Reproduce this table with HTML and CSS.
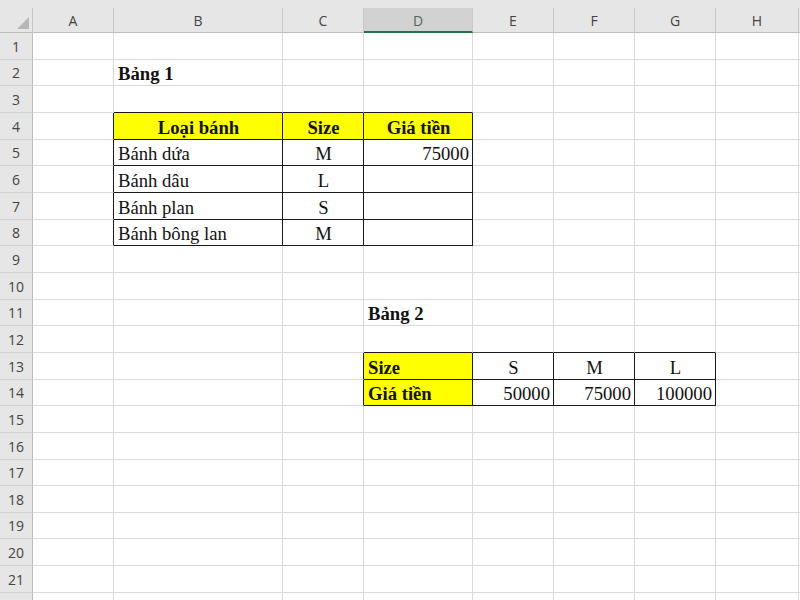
FILE: index.html
```html
<!DOCTYPE html>
<html lang="vi">
<head>
<meta charset="utf-8">
<title>Bảng</title>
<link rel="stylesheet" href="styles.css">
</head>
<body>
<div class="topstrip"></div>
<div class="sheet">
  <div class="corner"><span class="tri"></span></div>
  <div class="ch">A</div><div class="ch">B</div><div class="ch">C</div><div class="ch sel">D</div><div class="ch">E</div><div class="ch">F</div><div class="ch">G</div><div class="ch">H</div><div class="ch"></div>

  <div class="rh">1</div><div class="c"></div><div class="c"></div><div class="c"></div><div class="c"></div><div class="c"></div><div class="c"></div><div class="c"></div><div class="c"></div><div class="c"></div>
  <div class="rh">2</div><div class="c"></div><div class="c b">Bảng 1</div><div class="c"></div><div class="c"></div><div class="c"></div><div class="c"></div><div class="c"></div><div class="c"></div><div class="c"></div>
  <div class="rh">3</div><div class="c"></div><div class="c bb"></div><div class="c bb"></div><div class="c bb"></div><div class="c"></div><div class="c"></div><div class="c"></div><div class="c"></div><div class="c"></div>
  <div class="rh">4</div><div class="c br"></div><div class="c t y b ctr">Loại bánh</div><div class="c t y b ctr">Size</div><div class="c t y b ctr">Giá tiền</div><div class="c"></div><div class="c"></div><div class="c"></div><div class="c"></div><div class="c"></div>
  <div class="rh">5</div><div class="c br"></div><div class="c t">Bánh dứa</div><div class="c t ctr">M</div><div class="c t num">75000</div><div class="c"></div><div class="c"></div><div class="c"></div><div class="c"></div><div class="c"></div>
  <div class="rh">6</div><div class="c br"></div><div class="c t">Bánh dâu</div><div class="c t ctr">L</div><div class="c t"></div><div class="c"></div><div class="c"></div><div class="c"></div><div class="c"></div><div class="c"></div>
  <div class="rh">7</div><div class="c br"></div><div class="c t">Bánh plan</div><div class="c t ctr">S</div><div class="c t"></div><div class="c"></div><div class="c"></div><div class="c"></div><div class="c"></div><div class="c"></div>
  <div class="rh">8</div><div class="c br"></div><div class="c t">Bánh bông lan</div><div class="c t ctr">M</div><div class="c t"></div><div class="c"></div><div class="c"></div><div class="c"></div><div class="c"></div><div class="c"></div>
  <div class="rh">9</div><div class="c"></div><div class="c"></div><div class="c"></div><div class="c"></div><div class="c"></div><div class="c"></div><div class="c"></div><div class="c"></div><div class="c"></div>
  <div class="rh">10</div><div class="c"></div><div class="c"></div><div class="c"></div><div class="c"></div><div class="c"></div><div class="c"></div><div class="c"></div><div class="c"></div><div class="c"></div>
  <div class="rh">11</div><div class="c"></div><div class="c"></div><div class="c"></div><div class="c b">Bảng 2</div><div class="c"></div><div class="c"></div><div class="c"></div><div class="c"></div><div class="c"></div>
  <div class="rh">12</div><div class="c"></div><div class="c"></div><div class="c"></div><div class="c bb"></div><div class="c bb"></div><div class="c bb"></div><div class="c bb"></div><div class="c"></div><div class="c"></div>
  <div class="rh">13</div><div class="c"></div><div class="c"></div><div class="c br"></div><div class="c t y b">Size</div><div class="c t ctr">S</div><div class="c t ctr">M</div><div class="c t ctr">L</div><div class="c"></div><div class="c"></div>
  <div class="rh">14</div><div class="c"></div><div class="c"></div><div class="c br"></div><div class="c t y b">Giá tiền</div><div class="c t num">50000</div><div class="c t num">75000</div><div class="c t num">100000</div><div class="c"></div><div class="c"></div>
  <div class="rh">15</div><div class="c"></div><div class="c"></div><div class="c"></div><div class="c"></div><div class="c"></div><div class="c"></div><div class="c"></div><div class="c"></div><div class="c"></div>
  <div class="rh">16</div><div class="c"></div><div class="c"></div><div class="c"></div><div class="c"></div><div class="c"></div><div class="c"></div><div class="c"></div><div class="c"></div><div class="c"></div>
  <div class="rh">17</div><div class="c"></div><div class="c"></div><div class="c"></div><div class="c"></div><div class="c"></div><div class="c"></div><div class="c"></div><div class="c"></div><div class="c"></div>
  <div class="rh">18</div><div class="c"></div><div class="c"></div><div class="c"></div><div class="c"></div><div class="c"></div><div class="c"></div><div class="c"></div><div class="c"></div><div class="c"></div>
  <div class="rh">19</div><div class="c"></div><div class="c"></div><div class="c"></div><div class="c"></div><div class="c"></div><div class="c"></div><div class="c"></div><div class="c"></div><div class="c"></div>
  <div class="rh">20</div><div class="c"></div><div class="c"></div><div class="c"></div><div class="c"></div><div class="c"></div><div class="c"></div><div class="c"></div><div class="c"></div><div class="c"></div>
  <div class="rh">21</div><div class="c"></div><div class="c"></div><div class="c"></div><div class="c"></div><div class="c"></div><div class="c"></div><div class="c"></div><div class="c"></div><div class="c"></div>
  <div class="rh"></div><div class="c"></div><div class="c"></div><div class="c"></div><div class="c"></div><div class="c"></div><div class="c"></div><div class="c"></div><div class="c"></div><div class="c"></div>
</div>
</body>
</html>
```

FILE: styles.css
```css
html, body {
  margin: 0;
  padding: 0;
  width: 800px;
  height: 600px;
  overflow: hidden;
  background: #ffffff;
}

.topstrip {
  height: 8px;
  background: #e6e6e6;
}

.sheet {
  display: grid;
  grid-template-columns: 33px 81px 169px 81px 109px 81px 81px 81px 83px 1fr;
  grid-template-rows: 25px repeat(22, 26.67px);
}

.sheet > div {
  box-sizing: border-box;
  min-width: 0;
  overflow: hidden;
  white-space: nowrap;
}

.corner {
  position: relative;
  background: #e6e6e6;
  border-right: 1px solid #c4c4c4;
  border-bottom: 1px solid #bdbdbd;
}

.tri {
  position: absolute;
  right: 3px;
  bottom: 3px;
  width: 0;
  height: 0;
  border-left: 12px solid transparent;
  border-bottom: 12px solid #b7b7b7;
}

.ch {
  background: #e6e6e6;
  border-right: 1px solid #c8c8c8;
  border-bottom: 1px solid #bdbdbd;
  font-family: "Open Sans", "Noto Sans", sans-serif;
  font-size: 14px;
  color: #444444;
  display: flex;
  align-items: center;
  justify-content: center;
  padding-top: 1px;
}

.ch.sel {
  background: #d2d2d2;
  color: #4a6b57;
  border-bottom: 2px solid #217346;
}

.rh {
  background: #e6e6e6;
  border-right: 1px solid #bdbdbd;
  border-bottom: 1px solid #d0d0d0;
  font-family: "Open Sans", "Noto Sans", sans-serif;
  font-size: 14px;
  color: #444444;
  display: flex;
  align-items: flex-end;
  justify-content: center;
  padding-bottom: 3px;
  line-height: 19px;
}

.c {
  border-right: 1px solid #dadada;
  border-bottom: 1px solid #dadada;
  font-family: "Liberation Serif", "Times New Roman", serif;
  font-size: 18.67px;
  line-height: 21px;
  color: #111111;
  display: flex;
  align-items: flex-end;
  padding: 0 3px 1px 4px;
}

.b { font-weight: bold; }
.ctr { justify-content: center; }
.num { justify-content: flex-end; }
.y { background: #ffff00; }

.t {
  border-right-color: #1a1a1a;
  border-bottom-color: #1a1a1a;
}
.bb { border-bottom-color: #1a1a1a; }
.br { border-right-color: #1a1a1a; }
```
